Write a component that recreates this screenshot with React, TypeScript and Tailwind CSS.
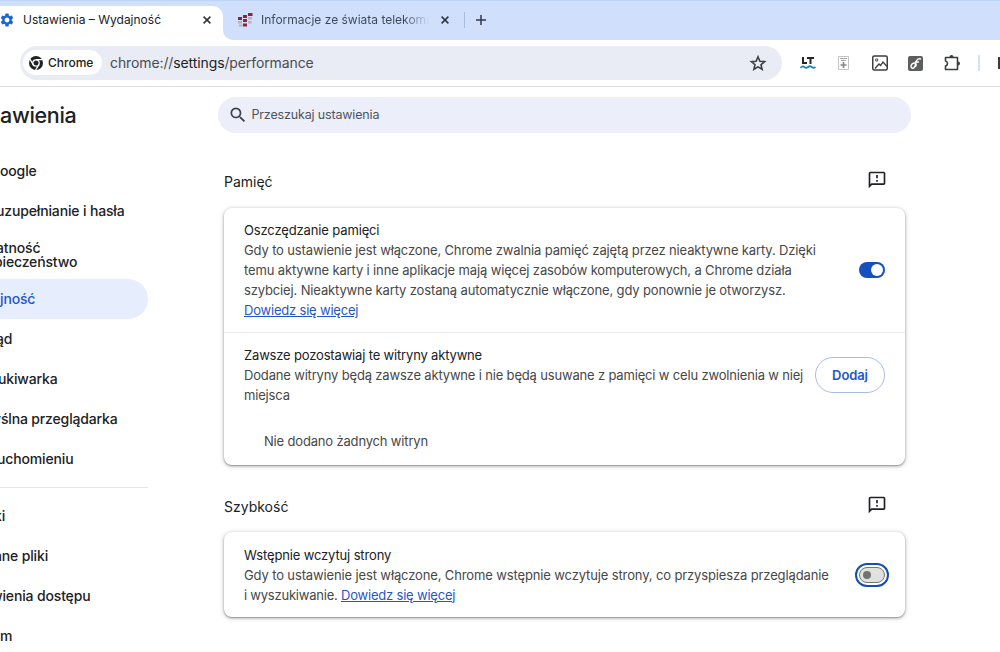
import { useState, type ReactNode } from 'react'
import clsx from 'clsx'
import { MdOutlineFeedback, MdSearch, MdSettings } from 'react-icons/md'

type NavItem = { label: string; offset: string; active?: boolean }

const NAV_TOP: NavItem[] = [
  { label: 'oogle', offset: 'ml-0' },
  { label: 'uzupełnianie i hasła', offset: '-ml-1' },
]

const NAV_MID: NavItem[] = [
  { label: 'jność', offset: 'ml-0', active: true },
  { label: 'ąd', offset: '-ml-1' },
  { label: 'ukiwarka', offset: '-ml-0.5' },
  { label: 'yślna przeglądarka', offset: '-ml-[7px]' },
  { label: 'uchomieniu', offset: '-ml-[3px]' },
]

const NAV_BOTTOM: NavItem[] = [
  { label: 'ki', offset: '-ml-[6px]' },
  { label: 'ane pliki', offset: '-ml-1.5' },
  { label: 'wienia dostępu', offset: '-ml-[9px]' },
  { label: 'm', offset: 'ml-0' },
]

function NavLink({ item }: { item: NavItem }) {
  return (
    <a
      className={clsx(
        'flex h-10 w-[148px] items-center rounded-r-full pb-0.5 text-[14px] font-medium tracking-[-.15px] whitespace-nowrap',
        item.active ? 'bg-[#e6edfc] text-[#1f57c8]' : 'text-[#202124]',
      )}
    >
      <span className={item.offset}>{item.label}</span>
    </a>
  )
}

function Close() {
  return (
    <svg viewBox="0 0 8 8" className="size-2 shrink-0" fill="none" stroke="#303338" strokeWidth="1.5">
      <path d="M.6.6l6.8 6.8M7.4.6L.6 7.4" />
    </svg>
  )
}

function TabStrip() {
  return (
    <div className="h-10 border-t border-[#bfd3f4] bg-[#cfdffc]">
      <div className="flex h-[39px]">
        <div className="mt-[5px] flex h-[34px] w-[223px] items-center rounded-tr-[10px] bg-white pb-[7px]">
          <MdSettings className="-ml-[1px] size-4 shrink-0 text-[#1a66d2]" />
          <span className="ml-2 w-[180px] text-[12px] text-[#202124]">Ustawienia – Wydajność</span>
          <Close />
        </div>
        <div className="flex flex-1 bg-white">
          <div className="flex flex-1 items-center rounded-bl-[10px] bg-[#cfdffc] pb-0.5">
            <svg viewBox="0 0 15 14" className="ml-[15px] h-3.5 w-[15px] shrink-0">
              <path fill="#8b2733" d="M0 4h4v3H0zM5 2h4v3H5zM5 6h4v3H5zM10 0h4.500v3H10zM5 10.500h4v3H5z" />
              <path fill="#b9b3b8" d="M0 8h4v2.500H0zM1 11.500h3.500v2H1zM10 4h4v2.500h-4zM10 8h3.500v2.500H10z" />
            </svg>
            <span className="ml-2 w-[168px] overflow-hidden bg-linear-to-r from-[#3c4656] from-85% to-transparent bg-clip-text text-[12px] whitespace-nowrap text-transparent">
              Informacje ze świata telekomu
            </span>
            <div className="ml-3">
              <Close />
            </div>
            <div className="ml-[15px] h-4 w-px bg-[#a9bbdc]" />
            <svg viewBox="0 0 10 10" className="ml-[11px] size-2.5" stroke="#303a4a" strokeWidth="1.500">
              <path d="M5 0v10M0 5h10" />
            </svg>
          </div>
        </div>
      </div>
    </div>
  )
}

function ChromeLogo() {
  return (
    <svg viewBox="0 0 14 14" className="size-3.5 shrink-0">
      <circle cx="7" cy="7" r="7" fill="#202124" />
      <circle cx="7" cy="7" r="3.200" fill="#202124" stroke="#fff" strokeWidth="1.300" />
      <path d="M7 3.700h6.500M4.150 8.650L.9 3M9.850 8.650L6.600 14" stroke="#fff" strokeWidth="1.300" />
    </svg>
  )
}

function Toolbar() {
  return (
    <div className="flex h-[47px] items-center border-b border-[#dddee1] bg-white">
      <div className="ml-5 flex h-[34px] w-[762px] shrink-0 items-center rounded-full bg-[#eaecf5] pb-px pl-[3px]">
        <div className="flex h-[25px] w-[79px] items-center rounded-full bg-white pl-1.5">
          <ChromeLogo />
          <span className="ml-[5px] text-[12px] font-medium text-[#202124]">Chrome</span>
        </div>
        <span className="ml-2 flex-1 pb-px text-[14px] tracking-[-.11px] text-[#474b52]">
          chrome://<span className="text-[#202124]">settings</span>/performance
        </span>
        <svg viewBox="0 0 18 18" className="mr-[15px] size-[18px]" fill="none" stroke="#3c4043" strokeWidth="1.600">
          <path d="M9 2.800l1.900 4.400 4.700.4-3.600 3.100 1.100 4.600L9 12.900l-4.100 2.400L6 10.700 2.400 7.600l4.700-.4z" />
        </svg>
      </div>

      <svg viewBox="0 0 16 14" className="ml-[18px] h-3.5 w-4 shrink-0" fill="none">
        <path d="M3 1v6h4M7 2h7M10.500 2v6" stroke="#242628" strokeWidth="2" />
        <path d="M.5 12q1.900-2.500 3.750-1t3.750 0 3.750 0 3.750 0" stroke="#1689ba" strokeWidth="1.700" />
      </svg>
      <svg viewBox="0 0 11 14" className="ml-[22px] h-3.5 w-[11px] shrink-0" fill="none">
        <path d="M.5.5h10v13H.5z" stroke="#c4c4c4" />
        <path d="M2 2.500h7M3 4.500h5" stroke="#a5a5a5" />
        <path d="M5.500 6v6M2.500 9h6" stroke="#858585" strokeWidth="1.600" />
      </svg>
      <svg viewBox="0 0 16 16" className="ml-[23px] size-4 shrink-0" fill="none" stroke="#3c3e40" strokeWidth="1.500">
        <rect x=".75" y="1" width="14.500" height="14" rx="1.500" />
        <circle cx="4.700" cy="5" r="1.200" strokeWidth="1" />
        <path d="M3 13.500l4-4.500 1.500 1.500 2.500-3.500 4 4.500" strokeWidth="1.300" />
      </svg>
      <svg viewBox="0 0 15 15" className="ml-5 size-[15px] shrink-0" fill="none">
        <rect width="15" height="15" rx="2" fill="#5d5e60" />
        <path d="M13 3q-4-1-5 3l-1 4q-1 3-3 2t0-4q3-2 4 0t-2 3M7 6h4" stroke="#fff" strokeWidth="1.400" />
      </svg>
      <svg viewBox="0 0 17 17" className="mb-0.5 ml-[21px] size-[17px] shrink-0" fill="none" stroke="#3a3c3e" strokeWidth="1.600">
        <path d="M1.500 3.500h12v12h-12v-3.500q2-.5 2-2.500t-2-2.500z" strokeLinejoin="round" />
        <path d="M5.500 3q0-2 2-2t2 2zM14 7.500q2 0 2 2t-2 2z" fill="#3a3c3e" stroke="none" />
      </svg>
      <div className="ml-[17px] h-4 w-0.5 shrink-0 bg-[#d3e0fa]" />
      <div className="ml-[18px] h-3 w-2 shrink-0 bg-[#3a3c3e]" />
    </div>
  )
}

function Sidebar() {
  return (
    <nav className="w-[218px] shrink-0 overflow-hidden">
      <h1 className="mt-[13px] h-[31px] text-[21.500px] leading-[30px] font-medium tracking-[-.32px] text-[#202124]">
        awienia
      </h1>
      <div className="mt-5">
        {NAV_TOP.map((item) => (
          <NavLink key={item.label} item={item} />
        ))}
        <a className="flex h-12 flex-col justify-center text-[14px] leading-[14px] font-medium tracking-[-.15px] text-[#202124]">
          <span className="-ml-1">atność</span>
          <span className="-ml-1.5">pieczeństwo</span>
        </a>
        {NAV_MID.map((item) => (
          <NavLink key={item.label} item={item} />
        ))}
      </div>
      <div className="mt-2 mb-2 h-px w-[148px] bg-[#e3e4e6]" />
      {NAV_BOTTOM.map((item) => (
        <NavLink key={item.label} item={item} />
      ))}
    </nav>
  )
}

function Toggle({ initial, focused }: { initial: boolean; focused?: boolean }) {
  const [on, setOn] = useState(initial)
  return (
    <button
      type="button"
      onClick={() => setOn(!on)}
      className={clsx(
        'flex h-4 w-[26px] shrink-0 items-center rounded-full',
        on ? 'justify-end bg-[#1550bd] pr-0.5' : 'border border-[#747775] bg-[#dfe2df] pl-[3px]',
        focused && 'outline-2 outline-offset-2 outline-[#1550ad]',
      )}
    >
      <span className={clsx('rounded-full', on ? 'size-3 bg-white' : 'size-2 bg-[#717371]')} />
    </button>
  )
}

function SectionTitle({ children }: { children: ReactNode }) {
  return (
    <div className="flex h-[50px] items-center justify-between pr-[18px]">
      <h2 className="text-[14px] tracking-normal text-[#202124]">{children}</h2>
      <MdOutlineFeedback className="mb-1 size-5 text-[#202124]" />
    </div>
  )
}

function More() {
  return <a className="tracking-[-.2px] text-[#1f57c8] underline">Dowiedz się więcej</a>
}

const CARD = 'w-[681px] rounded-lg bg-white shadow-[0_1px_2px_rgba(60,64,67,.5),0_1px_4px_1px_rgba(60,64,67,.2)]'

export default function App() {
  return (
    <div className="h-[652px] w-[1000px] overflow-hidden bg-white font-['Inter',sans-serif]">
      <TabStrip />
      <Toolbar />
      <div className="flex">
        <Sidebar />
        <main className="w-[693px] shrink-0 pt-[10px]">
          <div className="flex h-9 items-center rounded-full bg-[#eceefa] pl-[10px]">
            <MdSearch className="size-5 text-[#3c4043]" />
            <span className="ml-[3.500px] text-[12.500px] tracking-[-.16px] text-[#50545b]">Przeszukaj ustawienia</span>
          </div>

          <div className="mt-6 ml-1.5 w-[681px] text-[13px] leading-5 tracking-[-.14px] text-[#474747]">
            <SectionTitle>Pamięć</SectionTitle>
            <section className={clsx(CARD, 'mt-px')}>
              <div className="flex h-[125px] items-center border-b border-[#ececec] pl-5">
                <div className="w-[615px] whitespace-nowrap">
                  <h3 className="text-[#202124]">Oszczędzanie pamięci</h3>
                  <p>Gdy to ustawienie jest włączone, Chrome zwalnia pamięć zajętą przez nieaktywne karty. Dzięki</p>
                  <p>temu aktywne karty i inne aplikacje mają więcej zasobów komputerowych, a Chrome działa</p>
                  <p>szybciej. Nieaktywne karty zostaną automatycznie włączone, gdy ponownie je otworzysz.</p>
                  <More />
                </div>
                <Toggle initial />
              </div>
              <div className="flex h-[85px] items-center pb-px pl-5">
                <div className="w-[571px] tracking-[-.17px] whitespace-nowrap">
                  <h3 className="text-[#202124]">Zawsze pozostawiaj te witryny aktywne</h3>
                  <p>Dodane witryny będą zawsze aktywne i nie będą usuwane z pamięci w celu zwolnienia w niej</p>
                  <p>miejsca</p>
                </div>
                <button
                  type="button"
                  className="h-9 w-[70px] shrink-0 rounded-full border border-[#a8bce4] text-[13px] font-semibold tracking-[-.1px] text-[#1f57c8]"
                >
                  Dodaj
                </button>
              </div>
              <p className="h-[47px] pt-[13px] pl-10 tracking-[-.17px]">Nie dodano żadnych witryn</p>
            </section>

            <div className="h-[17px]" />
            <SectionTitle>Szybkość</SectionTitle>
            <section className={CARD}>
              <div className="flex h-[85px] items-center pl-5">
                <div className="w-[615px] whitespace-nowrap">
                  <h3 className="text-[#202124]">Wstępnie wczytuj strony</h3>
                  <p className="tracking-[-.13px]">
                    Gdy to ustawienie jest włączone, Chrome wstępnie wczytuje strony, co przyspiesza przeglądanie
                  </p>
                  <p className="tracking-[-.22px]">
                    i wyszukiwanie. <More />
                  </p>
                </div>
                <Toggle initial={false} focused />
              </div>
            </section>
          </div>
        </main>
      </div>
    </div>
  )
}
